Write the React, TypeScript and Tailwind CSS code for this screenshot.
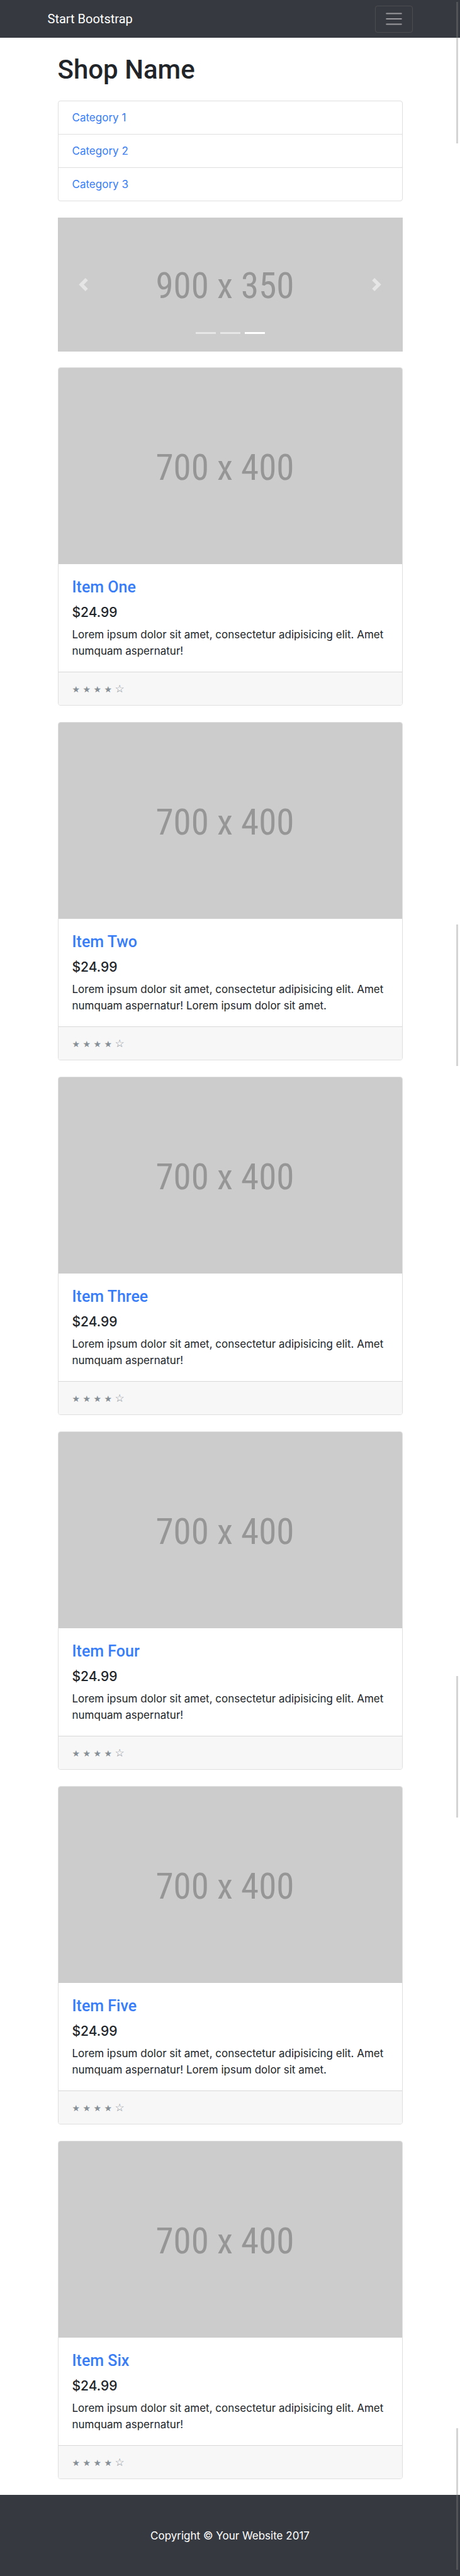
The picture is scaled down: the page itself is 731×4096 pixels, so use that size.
const categories = ["Category 1", "Category 2", "Category 3"];

const short = "Lorem ipsum dolor sit amet, consectetur adipisicing elit. Amet numquam aspernatur!";
const long = short + " Lorem ipsum dolor sit amet.";

const items = [
  { name: "Item One", text: short },
  { name: "Item Two", text: long },
  { name: "Item Three", text: short },
  { name: "Item Four", text: short },
  { name: "Item Five", text: long },
  { name: "Item Six", text: short },
];

function Placeholder({ label, ratio }: { label: string; ratio: string }) {
  return (
    <div className={`flex w-full items-center justify-center bg-[#cccccc] pt-1 pr-4 ${ratio}`}>
      <span className="font-['Roboto_Condensed','Open_Sans_Condensed','Liberation_Sans',sans-serif] text-[57px] leading-none text-[#969696]">
        {label}
      </span>
    </div>
  );
}

function Navbar() {
  return (
    <nav className="bg-[#373940]">
      <div className="mx-auto flex h-[60px] max-w-[580px] items-center justify-between">
        <a href="#" className="font-['Roboto',sans-serif] text-[20px] leading-8 text-white">Start Bootstrap</a>
        <button
          type="button"
          aria-label="Toggle navigation"
          className="flex h-[43px] w-[60px] items-center justify-center rounded border border-[#4b4d50]"
        >
          <svg viewBox="0 0 30 30" className="size-8" stroke="#9b9b9f" strokeWidth="2" strokeLinecap="round">
            <path d="M4 7h22M4 15h22M4 23h22" />
          </svg>
        </button>
      </div>
    </nav>
  );
}

function Carousel() {
  return (
    <section aria-label="Featured" className="relative">
      <Placeholder label="900 x 350" ratio="aspect-[18/7]" />
      <button type="button" aria-label="Previous" className="absolute inset-y-0 left-0 flex w-[15%] items-center justify-center opacity-50">
        <svg viewBox="0 0 8 8" className="size-[21px]" fill="#fff">
          <path d="M5.25 0l-4 4 4 4 1.5-1.5-2.5-2.5 2.5-2.5-1.5-1.5z" />
        </svg>
      </button>
      <button type="button" aria-label="Next" className="absolute inset-y-0 right-0 flex w-[15%] items-center justify-center opacity-50">
        <svg viewBox="0 0 8 8" className="size-[21px]" fill="#fff">
          <path d="M2.75 0l-1.5 1.5 2.5 2.5-2.5 2.5 1.5 1.5 4-4-4-4z" />
        </svg>
      </button>
      <div className="absolute inset-x-0 bottom-7 flex justify-center gap-[7px]">
        <button type="button" aria-label="Slide 1" className="h-[3px] w-8 bg-white/50" />
        <button type="button" aria-label="Slide 2" className="h-[3px] w-8 bg-white/50" />
        <button type="button" aria-label="Slide 3" className="h-[3px] w-8 bg-white" />
      </div>
    </section>
  );
}

function Card({ name, text }: { name: string; text: string }) {
  return (
    <article className="overflow-hidden rounded border border-[#dfdfdf] bg-white">
      <a href="#" aria-label={name} className="block">
        <Placeholder label="700 x 400" ratio="aspect-[7/4]" />
      </a>
      <div className="px-[22px] pt-[21px] pb-5">
        <h4 className="mb-[11px] font-['Roboto',sans-serif] text-[25px] leading-8 font-medium">
          <a href="#" className="text-[#377dfa]">{name}</a>
        </h4>
        <h5 className="mb-[9px] text-[21px] leading-[26px] font-medium">$24.99</h5>
        <p className="text-[17px] leading-[26px]">{text}</p>
      </div>
      <div className="border-t border-[#d8d8d8] bg-[#f7f7f7] px-[22px] py-[13px]">
        <small className="block h-[26px] font-['DejaVu_Sans',sans-serif] text-[14px] leading-[26px] text-[#868e96]">
          ★ ★ ★ ★ <span className="text-[17px]">☆</span>
        </small>
      </div>
    </article>
  );
}

function ScrollThumb({ place }: { place: string }) {
  return <div aria-hidden="true" className={`absolute right-[3px] h-[225px] w-[3px] bg-[#858585]/35 ${place}`} />;
}

export default function App() {
  return (
    <div className="relative bg-white font-['Inter','Liberation_Sans',sans-serif] text-[17px] leading-[26px] text-[#212529]">
      <Navbar />
      <main className="mx-auto max-w-[580px] px-4">
        <h1 className="pt-[25px] pb-[23px] font-['Roboto',sans-serif] text-[42px] leading-[52px] font-medium">Shop Name</h1>
        <div className="overflow-hidden rounded border border-[#dfdfdf]">
          {categories.map((c) => (
            <a
              key={c}
              href="#"
              className="block border-b border-[#dfdfdf] px-[22px] py-[13px] text-[#377dfa] last:border-b-0"
            >
              {c}
            </a>
          ))}
        </div>
        <div className="pt-[26px] pb-[25px]">
          <Carousel />
        </div>
        <div className="flex flex-col gap-[26px] pb-[25px]">
          {items.map((item) => (
            <Card key={item.name} {...item} />
          ))}
        </div>
      </main>
      <footer className="bg-[#373940] pt-[52px] pb-[51px]">
        <p className="text-center text-white">Copyright © Your Website 2017</p>
      </footer>
      <ScrollThumb place="top-[3px]" />
      <ScrollThumb place="top-[1470px]" />
      <ScrollThumb place="top-[2665px]" />
      <ScrollThumb place="bottom-[10px]" />
    </div>
  );
}
